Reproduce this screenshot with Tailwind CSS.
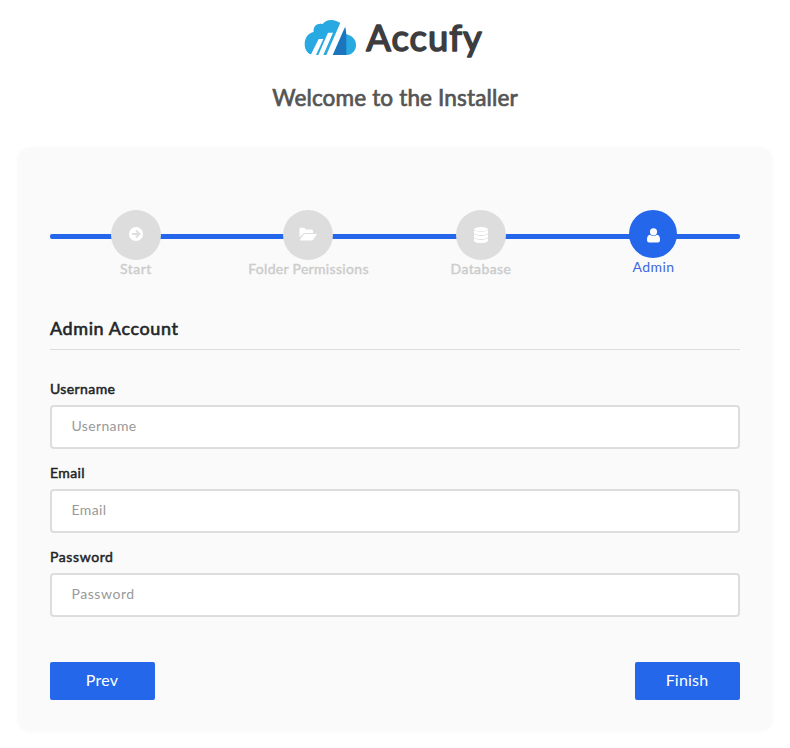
<!DOCTYPE html>
<html lang="en">
<head>
<meta charset="utf-8">
<title>Accufy Installer</title>
<script src="https://cdn.jsdelivr.net/npm/@tailwindcss/browser@4"></script>
</head>
<body class="h-[748px] overflow-hidden bg-white font-['Lato','Noto_Sans',sans-serif] text-[#212529]">
<header class="flex flex-col items-center pt-[10px]">
  <svg class="h-[60px] w-[200px]" viewBox="0 0 600 180" role="img" aria-label="Accufy">
    <path fill="#29a9e1" d="M57 135C38 134 29 120 29 103C29 83 40 69 56 66C53 49 67 38 83 42C93 28 112 27 129 35C145 42 153 56 153 73C172 76 184 90 183 107C182 124 169 135 151 135Z"/>
    <path fill="#1c75bc" d="M151 50L154 73V135H113Z"/>
    <path fill="#fff" d="M46 137L71 87H85L62 137ZM69 137L99 68H114L84 137ZM93 137L137 36L152 46L112 137Z"/>
    <text x="214" y="123" textLength="346" lengthAdjust="spacing" font-family="Lato" font-size="109" font-weight="400" fill="#3d3d3f" stroke="#3d3d3f" stroke-width="5" stroke-linejoin="round" stroke-linecap="round">Accufy</text>
  </svg>
  <h1 class="mt-3 h-8 text-[22.6px] leading-8 tracking-[0.12px] whitespace-nowrap text-[#555] [-webkit-text-stroke:0.7px_#555]">Welcome to the Installer</h1>
</header>
<main class="mx-auto mt-[35px] h-[581px] w-[752px] rounded-[10px] bg-[#fafafa] px-[31px] pt-[61px] shadow-[0_0_5px_rgba(0,0,0,0.05)]">
  <div class="relative h-[70px]">
    <div class="absolute top-[24px] h-[5px] w-full rounded-xs bg-[#2567eb]"></div>
    <ol class="relative -left-[0.3px] grid grid-cols-4 text-[14px] leading-[18px] text-[#ccc]">
      <li class="flex flex-col items-center">
        <div class="flex size-[50px] items-center justify-center rounded-full bg-[#ddd]"><svg class="mb-[2px] size-[14px]" viewBox="0 0 14 14"><circle cx="7" cy="7" r="7" fill="#fff"/><path d="M3 7h7M7 3.5L10.5 7L7 10.5" fill="none" stroke="#ddd" stroke-width="1.8"/></svg></div>
        <span class="tracking-[0.5px] [-webkit-text-stroke:0.4px_#ccc]">Start</span>
      </li>
      <li class="flex flex-col items-center">
        <div class="flex size-[50px] items-center justify-center rounded-full bg-[#ddd]"><svg class="mb-[2px] h-[14px] w-[18px]" viewBox="0 0 18 14" fill="#fff"><path d="M.5 10.5V2Q.5.7 1.8.7H5Q6.2.7 6.2 2V2.5H12.5Q14 2.5 14 4V6H6Q4.7 6 3.8 7Z"/><path d="M1 12.8L4.6 7.6Q5.1 6.9 6 6.9H17.3Q18.2 6.9 17.7 7.7L14.2 12.4Q13.6 13.4 12.5 13.4H1.3Q.8 13.4 1 12.8Z"/></svg></div>
        <span class="tracking-[0.32px] whitespace-nowrap [-webkit-text-stroke:0.4px_#ccc]">Folder Permissions</span>
      </li>
      <li class="flex flex-col items-center">
        <div class="flex size-[50px] items-center justify-center rounded-full bg-[#ddd]"><svg class="mb-[1px] h-[16px] w-[14px]" viewBox="0 0 14 16" fill="#fff"><ellipse cx="7" cy="2.3" rx="7" ry="2.2"/><path d="M0 3.3Q7 6.7 14 3.3V6Q13 8 7 8T0 6ZM0 7.3Q7 10.7 14 7.3V10Q13 12 7 12T0 10ZM0 11.3Q7 14.7 14 11.3V13.7Q13 16 7 16T0 13.7Z"/></svg></div>
        <span class="tracking-[0.4px] [-webkit-text-stroke:0.4px_#ccc]">Database</span>
      </li>
      <li class="flex flex-col items-center text-[#3f67dd]">
        <div class="flex size-[48px] items-center justify-center rounded-full bg-[#2567eb] pt-[3px]"><svg class="h-[15px] w-[13px]" viewBox="0 0 13 15" fill="#fff"><circle cx="6.5" cy="3.8" r="3.6"/><path d="M2.9 6.8Q6.5 9.2 10.1 6.8Q13 7.3 13 11.9Q13 14.5 10.8 14.5H2.2Q0 14.5 0 11.9Q0 7.3 2.9 6.8Z"/></svg></div>
        <span class="tracking-[0.4px]">Admin</span>
      </li>
    </ol>
  </div>
  <h2 class="mt-[34px] h-[36px] border-b border-[#dcdcdc] text-[18px] leading-[29px] tracking-[0.6px] [-webkit-text-stroke:0.6px_#212529]">Admin Account</h2>
  <form>
    <label class="mt-[30px] block h-[25px] text-[14px] leading-[18px] tracking-[0.4px] [-webkit-text-stroke:0.5px_#212529]" for="u">Username</label>
    <input id="u" class="block h-[44px] w-full rounded-[4px] border-2 border-[#ddd] bg-white px-[19.5px] pb-[3px] text-[14px] tracking-[0.35px] placeholder:text-[#999]" placeholder="Username">
    <label class="mt-[15px] block h-[25px] text-[14px] leading-[18px] tracking-[0.4px] [-webkit-text-stroke:0.5px_#212529]" for="e">Email</label>
    <input id="e" class="block h-[44px] w-full rounded-[4px] border-2 border-[#ddd] bg-white px-[19.5px] pb-[3px] text-[14px] tracking-[0.4px] placeholder:text-[#999]" placeholder="Email">
    <label class="mt-[15px] block h-[25px] text-[14px] leading-[18px] tracking-[0.6px] [-webkit-text-stroke:0.5px_#212529]" for="p">Password</label>
    <input id="p" class="block h-[44px] w-full rounded-[4px] border-2 border-[#ddd] bg-white px-[19.5px] pb-[3px] text-[14px] tracking-[0.55px] placeholder:text-[#999]" placeholder="Password">
    <div class="mt-[45px] flex justify-between text-[16px] tracking-[0.2px] text-white">
      <button type="button" class="h-[38px] w-[105px] rounded-xs bg-[#2567eb] pr-px pb-[2px]">Prev</button>
      <button type="button" class="h-[38px] w-[105px] rounded-xs bg-[#2567eb] pr-px pb-[2px]">Finish</button>
    </div>
  </form>
</main>
</body>
</html>
